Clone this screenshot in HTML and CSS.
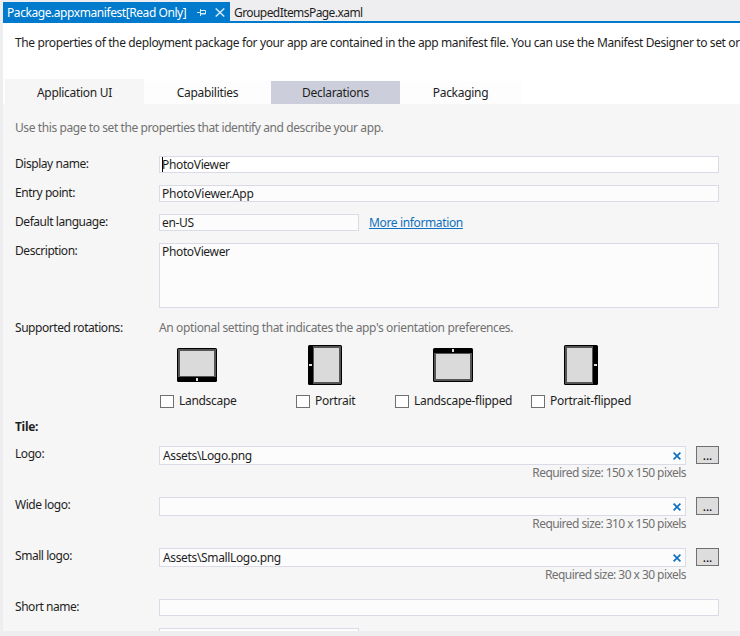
FILE: index.html
```html
<!DOCTYPE html>
<html lang="en">
<head>
<meta charset="utf-8">
<title>Package.appxmanifest</title>
<link rel="stylesheet" href="styles.css">
</head>
<body>
<div class="window">
  <div class="doc-tabs">
    <div class="doc-tab active"><span class="doc-name">Package.appxmanifest[Read Only]</span>
      <svg class="pin" width="9" height="7" viewBox="0 0 9 7"><path d="M0 3.5h3M3.5 0v7M4 1.5h4.5v3.5H4M4 4.5h4.5" fill="none" stroke="#d5eaf8"/></svg>
      <svg class="close" width="10" height="9" viewBox="0 0 10 9"><path d="M.7.5l8.6 8M9.3.5L.7 8.5" fill="none" stroke="#d5eaf8" stroke-width="1.5"/></svg>
    </div>
    <div class="doc-tab other">GroupedItemsPage.xaml</div>
  </div>
  <div class="header">
    <p class="intro">The properties of the deployment package for your app are contained in the app manifest file. You can use the Manifest Designer to set or</p>
    <div class="tabs">
      <div class="tab selected">Application UI</div>
      <div class="tab caps">Capabilities</div>
      <div class="tab decl">Declarations</div>
      <div class="tab pack">Packaging</div>
    </div>
  </div>
  <div class="panel">
    <p class="hint">Use this page to set the properties that identify and describe your app.</p>
    <div class="row"><label>Display name:</label><div class="field focus"><i class="caret"></i>PhotoViewer</div></div>
    <div class="row"><label>Entry point:</label><div class="field entry">PhotoViewer.App</div></div>
    <div class="row"><label>Default language:</label><div class="field short">en-US</div><a class="link">More information</a></div>
    <div class="row desc"><label>Description:</label><div class="field area">PhotoViewer</div></div>
    <div class="row rot"><label>Supported rotations:</label><span class="note">An optional setting that indicates the app's orientation preferences.</span></div>
    <div class="rotations">
      <div class="rotation">
        <svg class="device" width="42" height="42" viewBox="-21 -21 42 42"><use href="#tablet"/></svg>
        <span class="check"><i class="box"></i><span>Landscape</span></span>
      </div>
      <div class="rotation">
        <svg class="device" width="42" height="42" viewBox="-21 -21 42 42"><use href="#tablet" transform="rotate(90)"/></svg>
        <span class="check"><i class="box"></i><span>Portrait</span></span>
      </div>
      <div class="rotation">
        <svg class="device" width="42" height="42" viewBox="-21 -21 42 42"><use href="#tablet" transform="rotate(180)"/></svg>
        <span class="check"><i class="box"></i><span>Landscape-flipped</span></span>
      </div>
      <div class="rotation">
        <svg class="device" width="42" height="42" viewBox="-21 -21 42 42"><use href="#tablet" transform="rotate(-90)"/></svg>
        <span class="check"><i class="box"></i><span>Portrait-flipped</span></span>
      </div>
    </div>
    <h2>Tile:</h2>
    <div class="row asset"><label>Logo:</label>
      <div class="file"><div class="field path">Assets\Logo.png<svg width="8" height="8" viewBox="0 0 8 8"><use href="#clear"/></svg></div><span class="size">Required size: 150 x 150 pixels</span></div>
      <button>...</button></div>
    <div class="row asset"><label>Wide logo:</label>
      <div class="file"><div class="field path"><svg width="8" height="8" viewBox="0 0 8 8"><use href="#clear"/></svg></div><span class="size">Required size: 310 x 150 pixels</span></div>
      <button>...</button></div>
    <div class="row asset"><label>Small logo:</label>
      <div class="file"><div class="field path">Assets\SmallLogo.png<svg width="8" height="8" viewBox="0 0 8 8"><use href="#clear"/></svg></div><span class="size">Required size: 30 x 30 pixels</span></div>
      <button>...</button></div>
    <div class="row"><label>Short name:</label><div class="field"></div></div>
    <div class="row"><label></label><div class="field short"></div></div>
  </div>
</div>
<svg class="defs" width="0" height="0">
  <defs>
    <g id="tablet">
      <rect x="-20" y="-17" width="40" height="34" rx="1.5" fill="#000"/>
      <rect x="-19" y="-16" width="38" height="28" fill="#555"/>
      <rect x="-17" y="-14" width="34" height="25" fill="#dadada"/>
      <rect x="-1" y="13" width="2" height="3" fill="#ddd"/>
    </g>
    <path id="clear" d="M.6.6l6.8 6.8M7.4.6L.6 7.4" fill="none" stroke="#0e70c0" stroke-width="1.7"/>
  </defs>
</svg>
</body>
</html>
```
FILE: styles.css
```css
* { box-sizing: border-box; }
body { margin: 0; width: 740px; height: 636px; overflow: hidden; background: #eeeef0; color: #1e1e1e; font: 12px/16px "Noto Sans", sans-serif; letter-spacing: -0.3px; white-space: nowrap; }
p, h2 { margin: 0; font-size: inherit; }
.window { padding: 2px 0 0 3px; height: 631px; overflow: hidden; display: flex; flex-direction: column; }
.doc-tabs { display: flex; height: 21px; flex: none; border-bottom: 2px solid #007acc; }
.doc-tab { height: 19px; line-height: 21px; }
.doc-tab.active { width: 227px; background: #007acc; color: #fff; padding-left: 4px; display: flex; }
.doc-name { width: 190px; letter-spacing: -0.43px; }
.pin { margin-top: 7px; width: 9px; }
.close { margin: 6px 0 0 9px; }
.other { padding-left: 4px; letter-spacing: -0.57px; }
.header { height: 81px; flex: none; background: #fff; overflow: hidden; }
.intro { padding: 12px 0 0 12px; height: 56px; letter-spacing: -0.38px; }
.tabs { display: flex; align-items: flex-end; height: 25px; padding-left: 2px; }
.tab { height: 23px; line-height: 24px; text-align: center; background: #fdfdfd; }
.tab.selected { width: 139px; height: 25px; line-height: 28px; background: #f6f6f6; }
.caps { width: 127px; }
.decl { width: 129px; background: #cccedb; }
.pack { width: 121px; }
.panel { flex: none; height: 527px; overflow: hidden; background: #f6f6f6; padding: 16px 21px 0 12px; }
.hint { color: #717171; height: 36px; letter-spacing: -0.41px; }
.row { display: flex; height: 29px; }
.row label { width: 144px; flex: none; letter-spacing: -0.45px; }
.field { flex: 1; height: 17px; line-height: 16px; padding-left: 2px; border: 1px solid #d9dbe6; background: #fcfcfc; display: flex; letter-spacing: -0.35px; }
.field.entry { letter-spacing: -0.24px; }
.field.focus { background: #fff; }
.caret { width: 1px; height: 15px; background: #000; margin-right: -1px; }
.field.short { flex: none; width: 200px; }
.link { margin-left: 10px; color: #0e70c0; text-decoration: underline; line-height: 18px; letter-spacing: -0.36px; }
.desc { height: 77px; }
.field.area { height: 65px; }
.rot { height: 24px; }
.note, .size { color: #717171; }
.note { letter-spacing: -0.37px; }
.rotations { display: grid; grid-template-columns: 136px 99px 136px 140px; margin-left: 145px; height: 75px; }
.rotation { display: flex; flex-direction: column; }
.device { margin: 0 0 7px 16px; display: block; }
.rotation:nth-child(2) .device { margin-left: 8px; }
.rotation:nth-child(3) .device { margin-left: 37px; }
.rotation:nth-child(4) .device { margin-left: 29px; }
.check { display: flex; gap: 5px; height: 16px; }
.box { width: 14px; height: 13px; margin-top: 2px; border: 1px solid #707070; background: #fff; }
h2 { height: 27px; font-weight: 700; }
.asset { height: 51px; }
.file { width: 527px; display: flex; flex-direction: column; }
.field.path { flex: none; height: 19px; line-height: 18px; padding: 0 4px 0 3px; }
.path svg { margin: 5px 0 0 auto; }
.size { text-align: right; letter-spacing: -0.55px; }
button { width: 23px; height: 18px; margin-left: 10px; padding: 0; border: 1px solid #707070; background: #ddd; font: inherit; line-height: 15px; color: #000; letter-spacing: 0; }
.defs { position: absolute; }
```
